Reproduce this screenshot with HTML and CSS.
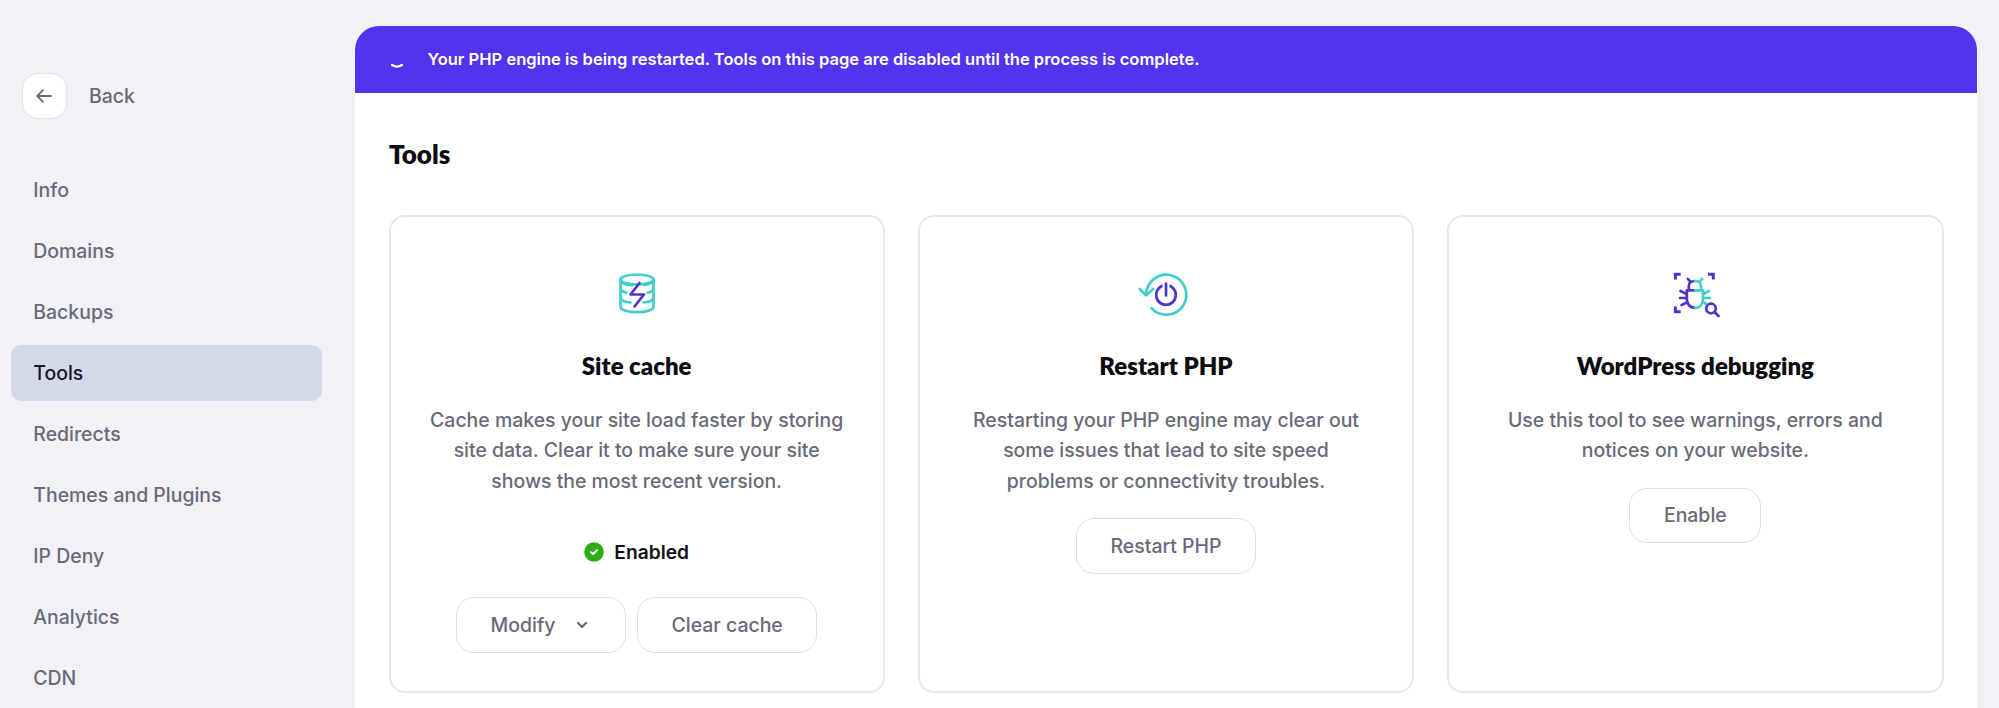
FILE: index.html
```html
<!DOCTYPE html>
<html lang="en">
<head>
<meta charset="utf-8">
<title>Tools</title>
<link rel="stylesheet" href="styles.css">
</head>
<body>
<div class="app">
  <aside class="sidebar">
    <a class="back">
      <span class="back-button">
        <svg width="16" height="14" viewBox="0 0 16 14"><path d="M15 7H1.5M7 1.2L1.3 7L7 12.8"/></svg>
      </span>
      <span>Back</span>
    </a>
    <nav class="nav">
      <a class="nav-item">Info</a>
      <a class="nav-item">Domains</a>
      <a class="nav-item">Backups</a>
      <a class="nav-item active">Tools</a>
      <a class="nav-item">Redirects</a>
      <a class="nav-item">Themes and Plugins</a>
      <a class="nav-item">IP Deny</a>
      <a class="nav-item">Analytics</a>
      <a class="nav-item">CDN</a>
    </nav>
  </aside>
  <main class="panel">
    <div class="banner">
      <svg class="spinner" width="20" height="20" viewBox="0 0 20 20"><path d="M5 16Q10 19.2 15 16"/></svg>
      <span>Your PHP engine is being restarted. Tools on this page are disabled until the process is complete.</span>
    </div>
    <h1 class="page-title">Tools</h1>
    <div class="cards">
      <section class="card">
        <svg class="card-icon" width="52" height="52" viewBox="0 0 52 52">
          <g class="teal">
            <ellipse cx="26" cy="12.5" rx="16.5" ry="5"/>
            <path d="M9.5 12.5V40C9.5 43 17 45.2 26 45.2S42.5 43 42.5 40V12.5"/>
            <path d="M9.5 13C10 16 15 17.8 21 18.2M42.5 13C42 15.5 38 17.3 33.5 18"/>
            <path d="M10 22C10 23.7 12 25 15.5 25.6M42 22C42 23.7 40 25 36.5 25.7"/>
            <path d="M10 31C10 33.5 14 35 19.5 35.5M42 31C42 33.3 38.5 35 32.5 35.5"/>
          </g>
          <path class="violet" d="M28.5 16L19.5 27.5H33L23.5 39.5"/>
        </svg>
        <h2 class="card-title">Site cache</h2>
        <p class="card-text">Cache makes your site load faster by storing<br>site data. Clear it to make sure your site<br>shows the most recent version.</p>
        <div class="status">
          <svg width="20" height="20" viewBox="0 0 20 20"><circle cx="10" cy="10" r="9.8"/><path d="M7 10.2L9.1 12L13 8.2"/></svg>
          <span>Enabled</span>
        </div>
        <div class="actions">
          <button class="button">Modify<svg class="chevron" width="12" height="8" viewBox="0 0 12 8"><path d="M2 2L6 5.8L10 2"/></svg></button>
          <button class="button">Clear cache</button>
        </div>
      </section>
      <section class="card">
        <svg class="card-icon" width="52" height="52" viewBox="0 0 52 52">
          <path class="teal" d="M6.3 28A20 20 0 1 1 11.5 41.2M-.2 22L6 28.4L13.2 22"/>
          <circle class="violet" cx="26" cy="28" r="9.8"/>
          <path class="gap-line" d="M26 14V22"/>
          <path class="violet" d="M26 16.5V28.5"/>
        </svg>
        <h2 class="card-title">Restart PHP</h2>
        <p class="card-text">Restarting your PHP engine may clear out<br>some issues that lead to site speed<br>problems or connectivity troubles.</p>
        <div class="actions"><button class="button">Restart PHP</button></div>
      </section>
      <section class="card">
        <svg class="card-icon" width="52" height="52" viewBox="0 0 52 52">
          <path class="violet square" d="M6.4 12.5V7.2H11.7M39 7.2H44.3V12.5M6.4 39.5V44.8H11.7"/>
          <g class="violet">
            <path d="M26 40.8C21 40.8 17.8 37 17.8 32V23.3H26"/>
            <path d="M19.8 23V19C19.8 15.8 22 14 26 14M21.8 14.8L18.8 12"/>
            <path d="M17.5 27L11.5 24M17.5 31H11M18.5 35.2L12.5 38"/>
          </g>
          <g class="teal">
            <path d="M26 40.8C31 40.8 34 37 34 32V23.3H26"/>
            <path d="M32 23V19C32 15.8 30 14 26 14M30 14.8L33.2 12"/>
            <path d="M34.2 27L39.8 24M34.2 31H41M33.5 35L37 36.5"/>
          </g>
          <circle class="violet" cx="42" cy="41.5" r="4.8"/>
          <path class="violet" d="M45.5 45L49.5 49"/>
        </svg>
        <h2 class="card-title">WordPress debugging</h2>
        <p class="card-text">Use this tool to see warnings, errors and<br>notices on your website.</p>
        <div class="actions"><button class="button">Enable</button></div>
      </section>
    </div>
  </main>
</div>
</body>
</html>
```
FILE: styles.css
```css
* { box-sizing: border-box; }
body {
  margin: 0;
  background: #f1f1f8;
  color: #696a78;
  font-family: Inter, sans-serif;
  font-size: 19.45px;
  font-weight: 500;
  line-height: 30.5px;
}
svg { display: block; fill: none; stroke-linecap: round; stroke-linejoin: round; overflow: visible; }
.app { display: flex; height: 708px; overflow: hidden; }
.sidebar { width: 355px; flex: none; padding: 73px 33px 0 11px; }
.back { display: flex; align-items: center; gap: 22px; padding-left: 11px; }
.back-button {
  display: flex;
  align-items: center;
  justify-content: center;
  width: 45px;
  height: 46px;
  border: 1.5px solid #e4e4ec;
  border-radius: 16px;
  background: #fff;
}
.back-button svg { margin-right: 1px; stroke: #6b6c7a; stroke-width: 1.9; }
.nav { display: flex; flex-direction: column; gap: 5.5px; margin-top: 43px; }
.nav-item { height: 55.5px; padding: 12.5px 22.3px; border-radius: 10px; }
.nav-item.active { background: #d3d9e6; color: #161629; }
.panel {
  width: 1622px;
  height: 760px;
  margin-top: 26px;
  border-radius: 24px 24px 0 0;
  background: #fff;
  overflow: hidden;
}
.banner {
  display: flex;
  align-items: center;
  gap: 20.5px;
  height: 66.5px;
  padding-left: 32px;
  background: #5333ed;
  color: #fff;
  font-size: 16.54px;
  font-weight: 600;
}
.spinner { stroke: #fff; stroke-width: 2.2; }
.page-title, .card-title { margin: 0; color: #0c0c12; font-family: Lato, sans-serif; font-weight: 800; }
.page-title { margin: 43.5px 34px 42.5px; font-size: 26px; line-height: 36px; }
.cards { display: grid; grid-template-columns: repeat(3, 1fr); gap: 33px; padding: 0 33.5px; }
.card {
  display: flex;
  flex-direction: column;
  align-items: center;
  height: 478.5px;
  padding-top: 50px;
  border: 2px solid #e8e8ec;
  border-radius: 16px;
}
.card-icon { stroke-width: 2.7; }
.teal { stroke: #3fcfca; }
.violet { stroke: #5133c9; }
.square { stroke-linecap: butt; stroke-linejoin: miter; stroke-width: 3; }
.gap-line { stroke: #fff; stroke-width: 7; stroke-linecap: butt; }
.card-title { margin-top: 29.5px; font-size: 24px; line-height: 36px; }
.card-text { margin: 20.5px 0 22px; text-align: center; }
.status { display: flex; align-items: center; gap: 10px; margin: 18.5px 0 30px; color: #111118; font-weight: 600; font-size: 19.2px; }
.status circle { fill: #2fab16; }
.status path { stroke: #fff; stroke-width: 2; }
.actions { display: flex; gap: 11px; }
.button {
  display: flex;
  align-items: center;
  height: 55.5px;
  padding: 0 33.5px;
  border: 1.5px solid #dedee4;
  border-radius: 18px;
  background: #fff;
  color: inherit;
  font: inherit;
}
.chevron { margin: 1px 4px 0 20px; stroke: #6b6c7a; stroke-width: 2.4; }
```
